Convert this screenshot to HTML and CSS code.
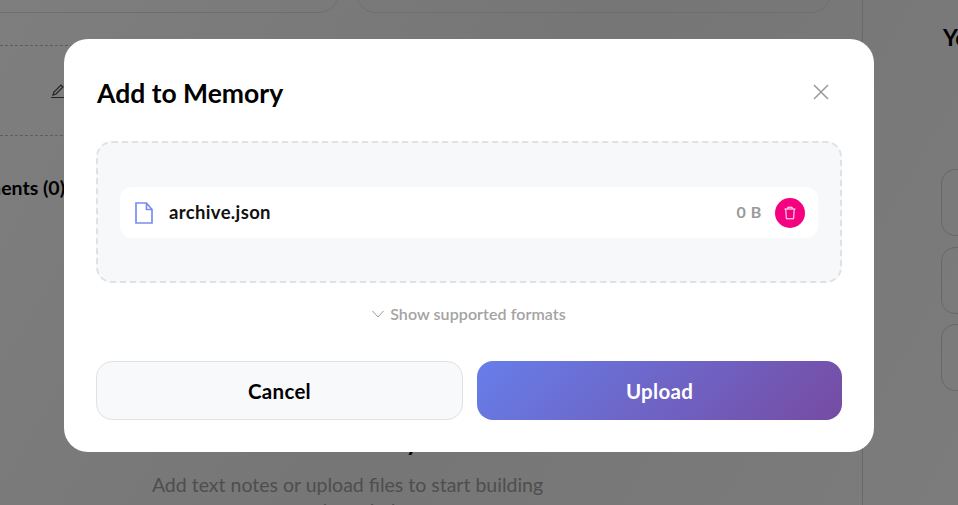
FILE: index.html
```html
<!DOCTYPE html>
<html lang="en">
<head>
<meta charset="utf-8">
<title>Add to Memory</title>
<link rel="stylesheet" href="styles.css">
</head>
<body>
<div class="backdrop-page">
  <div class="bg-card bg-card-left"></div>
  <div class="bg-card bg-card-right"></div>
  <div class="bg-dash bg-dash-1"></div>
  <div class="bg-dash bg-dash-2"></div>
  <svg class="bg-pencil" width="16" height="16" viewBox="0 0 16 16" fill="none" stroke="#444" stroke-width="1.200"><path d="M0 14.500h16M2 12l1-3 7-7 2 2-7 7z"/></svg>
  <div class="bg-count">Documents (0)</div>
  <div class="bg-divider"></div>
  <div class="bg-you">You</div>
  <div class="bg-tile bg-tile-1"></div>
  <div class="bg-tile bg-tile-2"></div>
  <div class="bg-tile bg-tile-3"></div>
  <div class="bg-empty">Your memory</div>
  <div class="bg-hint">Add text notes or upload files to start building</div>
  <div class="bg-hint-2">your knowledge</div>
</div>
<div class="overlay"></div>
<main class="modal">
  <header class="modal-head">
    <h1 class="modal-title">Add to Memory</h1>
    <svg class="close" width="18" height="18" viewBox="0 0 18 18" fill="none" stroke="#999" stroke-width="1.500"><path d="M2 2l14 14M16 2L2 16"/></svg>
  </header>
  <section class="dropzone">
    <div class="file-row">
      <svg class="file-icon" width="18" height="22" viewBox="0 0 18 22" fill="none" stroke="#7b8cf0" stroke-width="1.700"><path d="M1 1h10.500L17 7.500V21H1zM11.500 1v6.500H17"/></svg>
      <span class="file-name">archive.json</span>
      <span class="file-size">0 B</span>
      <span class="trash">
        <svg width="14" height="14" viewBox="0 0 14 14" fill="none" stroke="#fff" stroke-width="1"><path d="M1.500 3h11M4.800 3V1.200h4.400V3M2.800 3l.5 9.800h7.400l.5-9.800"/></svg>
      </span>
    </div>
  </section>
  <div class="formats">
    <svg width="12" height="8" viewBox="0 0 12 8" fill="none" stroke="#999" stroke-width="1"><path d="M.5 1l5.500 6 5.500-6"/></svg>
    <span class="formats-label">Show supported formats</span>
  </div>
  <footer class="actions">
    <button class="btn btn-cancel" type="button">Cancel</button>
    <button class="btn btn-upload" type="button">Upload</button>
  </footer>
</main>
</body>
</html>
```
FILE: styles.css
```css
* { box-sizing: border-box; }
html, body { margin: 0; height: 100%; overflow: hidden; }
body { font-family: Lato, "Noto Sans", sans-serif; background: #fff; width: 958px; height: 505px; position: relative; }

.backdrop-page { position: absolute; inset: 0; background: linear-gradient(120deg, #fdfdfd, #ececec 50%, #f8f8f8); overflow: hidden; color: #000; }
.bg-card { position: absolute; top: -40px; height: 53px; border: 1px solid #ddd; border-radius: 20px; }
.bg-card-left { left: -30px; width: 369px; }
.bg-card-right { left: 356px; width: 475px; }
.bg-dash { position: absolute; left: 0; width: 862px; border-top: 1px dashed #bbb; }
.bg-dash-1 { top: 45px; }
.bg-dash-2 { top: 135px; }
.bg-pencil { position: absolute; left: 51px; top: 83px; }
.bg-count { position: absolute; right: 893px; top: 176px; font-size: 19.500px; font-weight: 700; white-space: nowrap; }
.bg-divider { position: absolute; left: 862px; top: 0; bottom: 0; border-left: 1px solid #d0d0d0; }
.bg-you { position: absolute; left: 943px; top: 23px; font-size: 23px; font-weight: 700; }
.bg-tile { position: absolute; left: 941px; width: 60px; height: 67px; border: 1px solid #d0d0d0; border-radius: 14px; }
.bg-tile-1 { top: 169px; }
.bg-tile-2 { top: 247px; }
.bg-tile-3 { top: 324px; }
.bg-empty { position: absolute; left: 230px; top: 427px; width: 234px; text-align: center; font-size: 24px; font-weight: 700; }
.bg-hint, .bg-hint-2 { position: absolute; left: 100px; width: 495px; text-align: center; font-size: 19.500px; color: #9c9c9c; white-space: nowrap; }
.bg-hint { top: 473px; }
.bg-hint-2 { top: 499px; }

.overlay { position: absolute; inset: 0; background: rgba(0, 0, 0, .5); }

.modal { position: absolute; left: 64px; top: 39px; width: 810px; height: 413px; background: #fff; border-radius: 24px; padding: 32px; display: flex; flex-direction: column; }
.modal-head { display: flex; align-items: center; justify-content: space-between; height: 44px; padding: 0 12px 0 1px; margin-bottom: 26px; }
.modal-title { margin: 0; font-size: 26.500px; line-height: 44px; font-weight: 700; color: #000; }
.close { margin-bottom: 2px; }
.dropzone { height: 142px; border: 2px dashed #dfe1e5; border-radius: 16px; background: #f7f8fa; padding: 44px 22px; }
.file-row { height: 51px; background: #fff; border-radius: 12px; display: flex; align-items: center; padding: 0 13px 0 15px; }
.file-icon { flex: none; margin-right: 16px; }
.file-name { font-size: 18.500px; font-weight: 700; letter-spacing: .35px; color: #111; flex: 1; padding-bottom: 2px; }
.file-size { font-size: 16px; font-weight: 700; color: #999; margin-right: 13px; letter-spacing: .6px; padding-bottom: 2px; }
.trash { width: 30px; height: 30px; border-radius: 50%; background: #f5007f; display: flex; align-items: center; justify-content: center; }
.formats { display: flex; align-items: center; justify-content: center; gap: 6px; margin-top: 22px; height: 18px; font-size: 16px; font-weight: 600; color: #a3a3a3; }
.formats-label { padding-bottom: 2px; letter-spacing: .08px; }
.actions { display: flex; gap: 14px; margin-top: 38px; }
.btn { flex: 1; height: 59px; border-radius: 16px; font-family: inherit; font-size: 20.500px; font-weight: 700; letter-spacing: .3px; }
.btn-cancel { background: #f8f9fb; border: 1px solid #dfe1e5; color: #000; }
.btn-upload { background: linear-gradient(135deg, #667eea, #764ba2); border: 0; color: #fff; }
```
